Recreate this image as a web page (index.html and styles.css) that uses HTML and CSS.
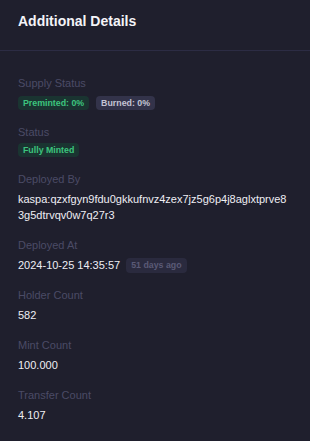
FILE: index.html
```html
<!DOCTYPE html>
<html>
<head>
<meta charset="utf-8">
<link rel="stylesheet" href="styles.css">
</head>
<body>
<div class="card">
  <div class="card-header">
    <h2 class="title">Additional Details</h2>
  </div>
  <div class="card-body">
    <div class="item">
      <div class="label">Supply Status</div>
      <div class="badges badges-supply">
        <span class="badge badge-green">Preminted: 0%</span>
        <span class="badge badge-gray">Burned: 0%</span>
      </div>
    </div>
    <div class="item">
      <div class="label">Status</div>
      <div class="badges badges-status">
        <span class="badge badge-green">Fully Minted</span>
      </div>
    </div>
    <div class="item">
      <div class="label">Deployed By</div>
      <div class="value address">kaspa:qzxfgyn9fdu0gkkufnvz4zex7jz5g6p4j8aglxtprve83g5dtrvqv0w7q27r3</div>
    </div>
    <div class="item">
      <div class="label">Deployed At</div>
      <div class="value row">2024-10-25 14:35:57 <span class="badge badge-muted">51 days ago</span></div>
    </div>
    <div class="item">
      <div class="label">Holder Count</div>
      <div class="value">582</div>
    </div>
    <div class="item">
      <div class="label">Mint Count</div>
      <div class="value">100.000</div>
    </div>
    <div class="item">
      <div class="label">Transfer Count</div>
      <div class="value">4.107</div>
    </div>
    <div class="item">
      <div class="label">Actions</div>
    </div>
  </div>
</div>
</body>
</html>
```

FILE: styles.css
```css
html, body {
  margin: 0;
  padding: 0;
  background: #1f1f2d;
}
body {
  font-family: "Liberation Sans", Arial, sans-serif;
  color: #ececf2;
  overflow: hidden;
}
.card {
  background: #1f1f2d;
  min-height: 441px;
}
.card-header {
  padding: 12px 18px 0;
  height: 38px;
  border-bottom: 1px solid #2c2c44;
}
.title {
  margin: 0;
  font-size: 14px;
  font-weight: 700;
  line-height: 18px;
  color: #f4f4f8;
}
.card-body {
  padding: 24px 18px 0;
  display: flex;
  flex-direction: column;
  gap: 14px;
}
.item {
  display: flex;
  flex-direction: column;
  gap: 4px;
}
.label {
  font-size: 11px;
  line-height: 16px;
  color: #4b4b66;
}
.value {
  font-size: 11px;
  line-height: 16px;
  color: #eeeef4;
}
.address {
  word-break: break-all;
}
.row {
  display: flex;
  align-items: center;
  gap: 6px;
}
.badges {
  display: flex;
  gap: 7px;
}
.badges-supply {
  margin-top: 1px;
}
.badges-status {
  margin-top: -1px;
}
.badge {
  display: inline-block;
  font-size: 8.8px;
  font-weight: 700;
  line-height: 14px;
  padding: 0 5px;
  border-radius: 4px;
}
.badge-green {
  background: #1a3431;
  color: #3dc47e;
}
.badge-gray {
  background: #33334a;
  color: #c4c4d4;
}
.badge-muted {
  background: #2a2a3e;
  color: #5a5a76;
  line-height: 15px;
  padding: 0 5px;
}
```
